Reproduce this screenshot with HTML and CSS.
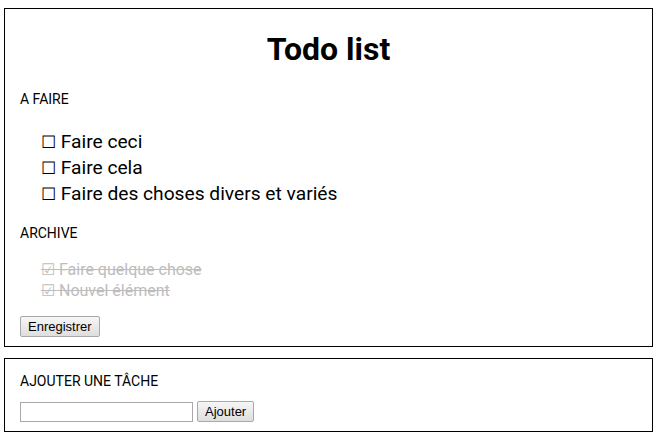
FILE: index.html
```html
<!DOCTYPE html>
<html lang="fr">
<head>
<meta charset="utf-8">
<title>Todo list</title>
<link rel="stylesheet" href="styles.css">
</head>
<body>
<section class="card main">
  <h1 class="title">Todo list</h1>
  <h2 class="section-label">A FAIRE</h2>
  <ul class="todo-list">
    <li class="todo"><span class="box">☐</span> Faire ceci</li>
    <li class="todo"><span class="box">☐</span> Faire cela</li>
    <li class="todo"><span class="box">☐</span> Faire des choses divers et variés</li>
  </ul>
  <h2 class="section-label">ARCHIVE</h2>
  <ul class="archive-list">
    <li class="done">☑ Faire quelque chose</li>
    <li class="done">☑ Nouvel élément</li>
  </ul>
  <button class="btn" type="button">Enregistrer</button>
</section>
<section class="card add">
  <h2 class="section-label">AJOUTER UNE TÂCHE</h2>
  <form class="add-form">
    <input class="field" type="text">
    <button class="btn" type="button">Ajouter</button>
  </form>
</section>
</body>
</html>
```
FILE: styles.css
```css
body {
  margin: 8px 4px;
  font-family: Roboto, "Liberation Sans", sans-serif;
  color: #000;
  background: #fff;
}
.card {
  border: 1px solid #000;
  padding: 0 15px 9px;
  margin-bottom: 11px;
}
.title {
  font-size: 32px;
  font-weight: 700;
  text-align: center;
  margin: 21px 0 23px;
}
.section-label {
  font-size: 14px;
  font-weight: 400;
  margin: 0;
}
.add .section-label {
  margin-top: 14px;
}
.todo-list {
  list-style: none;
  margin: 22px 0 18px;
  padding: 0 0 0 21px;
  font-size: 19.2px;
  line-height: 26px;
}
.box {
  font-size: 17px;
}
.archive-list {
  list-style: none;
  margin: 18px 0 15px;
  padding: 0 0 0 21px;
  font-size: 16px;
  line-height: 21px;
  color: #bdbdbd;
  text-decoration: line-through;
}
.btn {
  font-family: "Liberation Sans", Arial, sans-serif;
  font-size: 13px;
  padding: 0 7px;
  height: 21px;
  border: 1px solid #a9a9a9;
  border-radius: 2px;
  background: linear-gradient(#f6f6f6, #dedede);
  color: #000;
}
.add-form {
  display: flex;
  align-items: center;
  gap: 4px;
  margin-top: 12px;
}
.field {
  width: 173px;
  height: 20px;
  box-sizing: border-box;
  border: 1px solid #a9a9a9;
  padding: 1px 2px;
  margin: 0;
}
```
